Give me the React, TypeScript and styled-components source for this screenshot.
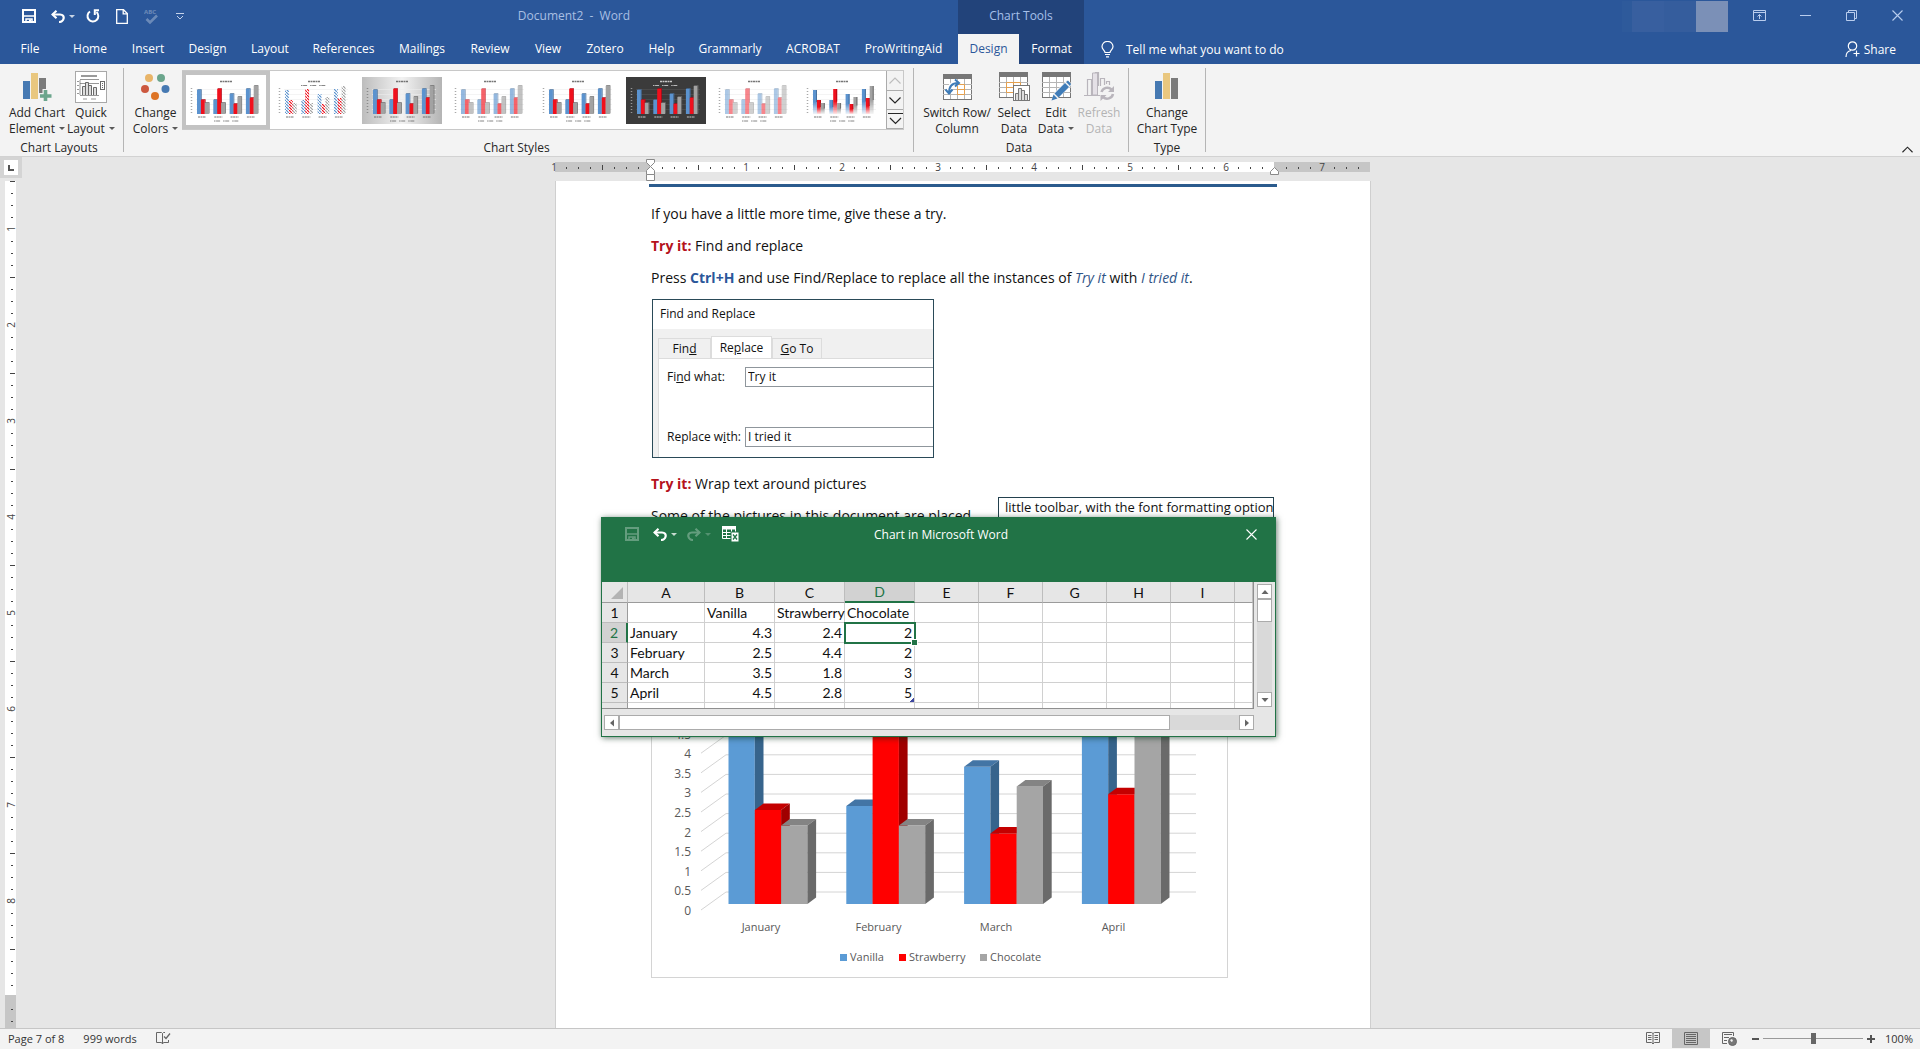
import React from "react";
import styled, { createGlobalStyle, css } from "styled-components";

const UI = '"Open Sans", "Noto Sans", sans-serif';
const SHEET = 'Lato, "Open Sans", sans-serif';
const NAVY = "#2b579a";
const GREEN = "#217346";

const GlobalStyle = createGlobalStyle`
  *, *::before, *::after { box-sizing: border-box; }
  body { margin: 0; font-family: ${UI}; font-size: 12px; color: #262626; }
  button, input { font: inherit; color: inherit; }
  button { background: none; border: 0; padding: 0; }
  svg { display: block; flex: none; }
  p { margin: 0; }
`;

const Shell = styled.div`
  display: flex;
  flex-direction: column;
  height: 100vh;
  overflow: hidden;
  background: #e6e6e6;
`;

/* ---------- title bar and tabs ---------- */

const Header = styled.header`
  background: ${NAVY};
  color: #fff;
`;

const TitleRow = styled.div`
  display: flex;
  height: 34px;
`;

const QuickAccess = styled.div`
  display: grid;
  grid-template-columns: 29px 35px 30px 28px 32px auto;
  justify-content: start;
  align-items: center;
  width: 190px;
  height: 32px;
  padding-left: 22px;
`;

const IconButton = styled.button<{ $dim?: boolean }>`
  display: flex;
  align-items: center;
  opacity: ${(p) => (p.$dim ? 0.3 : 1)};
`;

const DocTitle = styled.div`
  width: 768px;
  line-height: 32px;
  text-align: center;
  white-space: pre;
  color: #a9bfe3;
`;

const ContextTitle = styled.div`
  width: 126px;
  line-height: 32px;
  text-align: center;
  background: #22437a;
  color: #a6c0ea;
`;

const Account = styled.div`
  display: flex;
  height: 32px;
  margin: 0 8px 0 auto;
  padding-top: 1px;
`;

const AccountBlock = styled.div<{ $w: number; $bg: string }>`
  width: ${(p) => p.$w}px;
  background: ${(p) => p.$bg};
`;

const WindowButton = styled.button`
  display: grid;
  place-items: center;
  width: 46px;
  height: 31px;
`;

const TabRow = styled.nav`
  display: flex;
  height: 30px;
`;

const Tab = styled.button<{ $w: number; $kind?: "active" | "context" }>`
  width: ${(p) => p.$w}px;
  line-height: 30px;
  color: #fff;
  white-space: nowrap;
  ${(p) => p.$kind === "active" && css`background: #f3f3f3; color: ${NAVY};`}
  ${(p) => p.$kind === "context" && css`background: #22437a;`}
`;

const TabGap = styled.div`
  width: 4px;
`;

const HeaderAction = styled.button<{ $end?: boolean }>`
  display: flex;
  align-items: center;
  gap: ${(p) => (p.$end ? 4 : 12)}px;
  margin-left: ${(p) => (p.$end ? "auto" : "17px")};
  margin-right: ${(p) => (p.$end ? 24 : 0)}px;
`;

/* ---------- ribbon ---------- */

const Ribbon = styled.div`
  display: flex;
  height: 93px;
  background: #f3f3f3;
  border-bottom: 1px solid #d2d2d2;
`;

const Group = styled.section<{ $end: number }>`
  position: relative;
  display: flex;
  flex-direction: column;
  padding: 0 ${(p) => p.$end}px 0 5px;
  &::after {
    content: "";
    position: absolute;
    right: 0;
    top: 4px;
    bottom: 4px;
    width: 1px;
    background: #b5b5b5;
  }
`;

const GroupBody = styled.div`
  display: flex;
  height: 76px;
`;

const GroupLabel = styled.div`
  line-height: 16px;
  text-align: center;
`;

const BigButton = styled.button<{ $w: number }>`
  display: flex;
  flex-direction: column;
  align-items: center;
  width: ${(p) => p.$w}px;
  padding-top: 4px;
  line-height: 16px;
  white-space: nowrap;
  &:disabled { color: #b4b4b4; }
`;

const BigIcon = styled.span`
  display: grid;
  place-items: center;
  height: 37px;
`;

const Caret = styled.span`
  display: inline-block;
  margin-left: 4px;
  vertical-align: 3px;
  border: 3px solid transparent;
  border-top-color: currentColor;
  border-bottom: 0;
  opacity: 0.75;
`;

const Gallery = styled.div`
  display: flex;
  height: 60px;
  margin-top: 6px;
  border: 1px solid #c8c8c8;
  border-left: 0;
  background: #fff;
`;

const StyleItem = styled.button<{ $on?: boolean }>`
  display: grid;
  place-items: center;
  width: 88px;
  height: 58px;
  ${(p) => p.$on && css`box-shadow: inset 0 0 0 4px #c3c3c3;`}
`;

const GalleryScroll = styled.div`
  display: grid;
  grid-template-rows: 20px 19px 19px;
  width: 17px;
`;

const ScrollStep = styled.button<{ $off?: boolean }>`
  display: grid;
  place-items: center;
  background: #f3f3f3;
  color: ${(p) => (p.$off ? "#bdbdbd" : "#262626")};
  border-left: 1px solid #ababab;
  border-bottom: 1px solid #ababab;
`;

const Collapse = styled.button`
  align-self: flex-end;
  margin: 0 7px 3px auto;
`;

/* ---------- workspace ---------- */

const Workspace = styled.main`
  display: flex;
  flex: 1;
  min-height: 0;
`;

const Side = styled.div`
  width: 22px;
  overflow: hidden;
`;

const TabStop = styled.button`
  display: grid;
  place-items: center;
  width: 22px;
  height: 21px;
  border: solid #d4d4d4;
  border-width: 3px 4px 3px 4px;
  background: #fff;
`;

const DocArea = styled.div`
  display: flex;
  flex: 1;
  flex-direction: column;
  align-items: center;
  min-height: 0;
  padding-right: 16px;
`;

const Sheet = styled.div`
  position: relative;
  flex: 1;
  width: 814px;
  min-height: 0;
`;

const Page = styled.article`
  height: 100%;
  overflow: hidden;
  padding: 3px 96px 0 95px;
  background: #fff;
  box-shadow: 0 0 0 1px #cfcfcf;
  clip-path: inset(0 -2px);
  color: #111;
  font-size: 14px;
  line-height: 32px;
`;

const Rule = styled.hr`
  height: 3px;
  margin: 0 -3px 11px -2px;
  border: 0;
  background: #2b5b8d;
`;

const TryIt = styled.strong`
  color: #b5121b;
`;

const Key = styled.strong`
  color: #2b579a;
`;

const Term = styled.em`
  color: #2f5486;
`;

const FindShot = styled.form`
  width: 282px;
  height: 159px;
  margin: 5px 0 10px 1px;
  overflow: hidden;
  border: 1px solid #2a4a58;
  background: #f0f0f0;
  font-size: 12px;
  line-height: 20px;
`;

const ShotTitle = styled.div`
  height: 29px;
  padding-left: 7px;
  line-height: 28px;
  background: #fff;
`;

const ShotTabs = styled.div`
  display: flex;
  align-items: flex-end;
  height: 29px;
  padding-left: 5px;
`;

const ShotTab = styled.button<{ $on?: boolean; $w: number }>`
  width: ${(p) => p.$w}px;
  height: ${(p) => (p.$on ? 22 : 20)}px;
  border: 1px solid #dcdcdc;
  border-bottom: 0;
  background: ${(p) => (p.$on ? "#fff" : "#f0f0f0")};
  line-height: 20px;
`;

const ShotPanel = styled.div`
  display: flex;
  flex-direction: column;
  gap: 40px;
  height: 100px;
  margin-left: 5px;
  padding: 8px 0 0 8px;
  border: 1px solid #dcdcdc;
  border-width: 1px 0 0 1px;
  background: #fff;
`;

const Field = styled.label`
  display: grid;
  grid-template-columns: 78px 1fr;
`;

const TextBox = styled.input`
  width: 100%;
  height: 20px;
  padding: 0 2px;
  border: 1px solid #8f969c;
  border-right: 0;
  border-radius: 0;
  background: #fff;
`;

const WrapRow = styled.div`
  display: grid;
  grid-template-columns: 347px 276px;
  height: 60px;
  white-space: nowrap;
`;

const Callout = styled.div`
  height: 60px;
  margin-top: -3px;
  padding-left: 6px;
  border: 1px solid #23414e;
  font-size: 13px;
  line-height: 18px;
`;

/* ---------- data window ---------- */

const DataWindow = styled.section`
  position: absolute;
  left: 45px;
  top: 336px;
  width: 675px;
  height: 220px;
  border: 1px solid ${GREEN};
  background: #e6e6e6;
  box-shadow: 1px 1px 6px rgba(0, 40, 20, 0.6);
`;

const DataTitle = styled.div`
  display: grid;
  grid-template-columns: 1fr auto 1fr;
  align-items: center;
  height: 64px;
  padding: 0 18px 32px 23px;
  background: ${GREEN};
  color: #fff;
`;

const DataTools = styled.div`
  display: grid;
  grid-template-columns: 28px 34px 35px auto;
  justify-content: start;
  align-items: center;
`;

const DataClose = styled.button`
  justify-self: end;
`;

const DataBody = styled.div`
  display: grid;
  grid-template-columns: 652px 15px;
  column-gap: 3px;
  height: 127px;
`;

const GridClip = styled.div`
  height: 127px;
  overflow: hidden;
  border: solid #8f8f8f;
  border-width: 0 1px 1px 0;
`;

const Grid = styled.table`
  width: 651px;
  table-layout: fixed;
  border-spacing: 0;
  font-family: ${SHEET};
  font-size: 14px;
  line-height: 19px;
  color: #111;
`;

const ColHead = styled.th<{ $on?: boolean }>`
  height: 20px;
  padding: 0;
  font-weight: 400;
  border: solid #9b9b9b;
  border-width: 0 1px 1px 0;
  border-right-color: #bdbdbd;
  background: #e6e6e6;
  ${(p) => p.$on && css`background: #d2d2d2; color: ${GREEN}; border-bottom: 2px solid ${GREEN};`}
`;

const RowHead = styled.th<{ $on?: boolean }>`
  height: 20px;
  padding: 0;
  font-weight: 400;
  border: solid #9b9b9b;
  border-width: 0 1px 1px 0;
  border-bottom-color: #bdbdbd;
  background: #e6e6e6;
  ${(p) => p.$on && css`background: #d2d2d2; color: ${GREEN}; border-right: 2px solid ${GREEN};`}
`;

const Cell = styled.td<{ $num?: boolean; $on?: boolean; $last?: boolean }>`
  position: relative;
  height: 20px;
  padding: 0 2px;
  text-align: ${(p) => (p.$num ? "right" : "left")};
  white-space: nowrap;
  border: solid #d0d0d0;
  border-width: 0 1px 1px 0;
  background: #fff;
  ${(p) => p.$on && css`
    outline: 2px solid ${GREEN};
    outline-offset: -1px;
    z-index: 1;
    &::after {
      content: "";
      position: absolute;
      right: -3px;
      bottom: -3px;
      width: 5px;
      height: 5px;
      background: ${GREEN};
      box-shadow: 0 0 0 1px #fff;
    }
  `}
  ${(p) => p.$last && css`
    &::after {
      content: "";
      position: absolute;
      right: 0;
      bottom: 0;
      width: 4px;
      height: 4px;
      background: linear-gradient(135deg, transparent 40%, #3f48a0 40%);
    }
  `}
`;

const VBar = styled.div`
  display: grid;
  grid-template-rows: 15px 23px 1fr 15px;
  height: 123px;
  margin-top: 2px;
  background: #d9d9d9;
`;

const HBar = styled.div`
  display: grid;
  grid-template-columns: 15px 551px 1fr 15px;
  width: 650px;
  height: 15px;
  margin: 6px 0 0 2px;
  background: #d9d9d9;
`;

const BarPart = styled.button`
  display: grid;
  place-items: center;
  border: 1px solid #ababab;
  background: #fff;
`;

/* ---------- status bar ---------- */

const StatusBar = styled.footer`
  display: flex;
  align-items: center;
  height: 21px;
  padding: 0 7px 1px 8px;
  border-top: 1px solid #c6c6c6;
  background: #f3f3f3;
  color: #333;
  font-size: 11px;
  white-space: nowrap;
`;

const StatusText = styled.span`
  margin-right: 19px;
`;

const Views = styled.div`
  display: flex;
  align-self: stretch;
  margin-left: auto;
  margin-right: 4px;
`;

const ViewButton = styled.button<{ $on?: boolean }>`
  display: grid;
  place-items: center;
  width: 38px;
  background: ${(p) => (p.$on ? "#c6c6c6" : "transparent")};
`;

const ZoomSlider = styled.input`
  appearance: none;
  width: 100px;
  height: 12px;
  margin: 0 4px;
  background: linear-gradient(#9a9a9a, #9a9a9a) center / 100% 1px no-repeat;
  &::-webkit-slider-thumb {
    appearance: none;
    width: 5px;
    height: 11px;
    background: #666;
  }
`;

const ZoomValue = styled.button`
  margin-left: 10px;
`;

/* ---------- icons ---------- */

const SaveIcon = () => (
  <svg width="14" height="14" viewBox="0 0 14 14" fill="none" stroke="#fff" strokeWidth="2">
    <path d="M1 1H13V13H1Z" />
    <path d="M2 7H12" strokeWidth="1.5" />
    <path d="M4 13V10H10V13" strokeWidth="1.5" />
    <path d="M8 10.5V13" />
  </svg>
);

const UndoIcon = ({ flip }: { flip?: boolean }) => (
  <svg width="14" height="13" viewBox="0 0 14 13" fill="none" stroke="#fff" strokeWidth="2.2" transform={flip ? "scale(-1 1)" : undefined}>
    <path d="M5.5 0.8L1.5 4.5L5.5 8.2" />
    <path d="M1.5 4.5H9C12 4.5 13 6.500 12.600 8.500C12.200 10.500 10 12 8 12" />
  </svg>
);

const RepeatIcon = () => (
  <svg width="14" height="14" viewBox="0 0 14 14" fill="none" stroke="#fff" strokeWidth="2">
    <path d="M4 2.500A5.400 5.400 0 1 0 10.500 3" />
    <path d="M13 1.200H8.800V6" />
  </svg>
);

const NewIcon = () => (
  <svg width="12" height="15" viewBox="0 0 12 15" fill="none" stroke="#fff" strokeWidth="1.300">
    <path d="M0.700 0.700H7.500L11.300 4.500V14.300H0.700Z" />
    <path d="M7.200 0.700V4.800H11.300" />
  </svg>
);

const SpellIcon = () => (
  <svg width="15" height="17" viewBox="0 0 15 17">
    <text x="0" y="6" fontSize="6" fontWeight="700" fill="#fff">ABC</text>
    <path d="M2.500 11L6 14.500L13 7.500" fill="none" stroke="#fff" strokeWidth="2.600" />
  </svg>
);

const CustomIcon = () => (
  <svg width="8" height="7" viewBox="0 0 8 7" fill="none" stroke="#c4d2ea">
    <path d="M0 0.500H8M1 3L4 6L7 3" />
  </svg>
);

const Chevron = ({ up, size = 12 }: { up?: boolean; size?: number }) => (
  <svg width={size} height="7" viewBox="0 0 12 7" fill="none" stroke="currentColor" strokeWidth="1.200">
    <path d={up ? "M0.500 6.500L6 1L11.500 6.500" : "M0.500 0.500L6 6L11.500 0.500"} />
  </svg>
);

const BulbIcon = () => (
  <svg width="13" height="17" viewBox="0 0 13 17" fill="none" stroke="#fff" strokeWidth="1.200">
    <path d="M4 11.500C4 9.500 1 8.500 1 5.600A5.300 5 0 0 1 12 5.600C12 8.500 9 9.500 9 11.500Z" />
    <path d="M4 13.500H9M5 15.800H8" />
  </svg>
);

const ShareIcon = () => (
  <svg width="15" height="17" viewBox="0 0 15 17" fill="none" stroke="#fff" strokeWidth="1.200">
    <circle cx="7.500" cy="5" r="4.200" />
    <path d="M1 16C1 12.500 3 10 6 9.500M11.500 9.500V15.500M8.500 12.500H14.500" />
  </svg>
);

const ChartColumns = ({ plus }: { plus?: boolean }) => (
  <svg width={plus ? 29 : 24} height="29" viewBox={plus ? "0 0 29 29" : "0 0 24 29"}>
    <path fill="#4679b2" d="M0 9H7V27H0Z" />
    <path fill="#e9c77f" d="M8 1H15V27H8Z" />
    <path fill="#7b7b7b" d="M16 6H23V27H16Z" />
    {plus && (
      <g>
        <path d="M22.500 17V30M16 24H29" stroke="#f3f3f3" strokeWidth="6" />
        <path d="M22.500 18V30M17 24H28.500" stroke="#6ba58c" strokeWidth="3.600" />
      </g>
    )}
  </svg>
);

const QuickLayoutIcon = () => (
  <svg width="32" height="32" viewBox="0 0 32 32" fill="none" stroke="#6a6a6a">
    <rect x="0.500" y="0.500" width="31" height="31" fill="#fff" stroke="#a8a8a8" />
    <path d="M6 5H22" stroke="#9a9a9a" strokeWidth="2" />
    <path d="M5 24.500H24M5 9V24M2 10.500H4M2 14.500H4M2 18.500H4M2 22.500H4M5 8.500H24M5 12.500H24M8 28H12M16 28H21" strokeWidth="0.700" />
    <path d="M7.500 24V15.500H10.500V24M10.500 24V11.500H13.500V24M13.500 24V14.500H16.500V24M18.500 24V16.500H21.500V24" fill="#ddd" />
    <rect x="25.500" y="10.500" width="4" height="8" />
    <path d="M27.500 12V17.500" strokeDasharray="1 1" />
  </svg>
);

const ColorsIcon = () => (
  <svg width="29" height="28" viewBox="0 0 29 28">
    <circle cx="8" cy="5" r="4" fill="#e8b468" />
    <circle cx="20" cy="5" r="4" fill="#6ba58c" />
    <circle cx="4" cy="16" r="4" fill="#cc583f" />
    <circle cx="24.500" cy="16" r="4" fill="#4679b2" />
    <circle cx="14" cy="23" r="4" fill="#dd7426" />
  </svg>
);

const TableBase = () => (
  <g>
    <rect x="0.500" y="0.500" width="28" height="25" fill="#fff" stroke="#777" />
    <path d="M0 0H29V5H0Z" fill="#777" />
    <path d="M0 10.500H29M0 15.500H29M0 20.500H29M7.500 5V25M14.500 5V25M21.500 5V25" stroke="#b5b5b5" fill="none" />
  </g>
);

const SwitchIcon = () => (
  <svg width="29" height="26" viewBox="0 0 29 26" fill="none">
    <TableBase />
    <path d="M7.500 10.500H21.500V20.500H14.500V15.500H21.500M14.500 10.500V20.500" stroke="#e5a04e" />
    <path d="M6 19C6 13 9 9 15 9" stroke="#fff" strokeWidth="5" />
    <path d="M6 19C6 13 9 9 15 9M12 5.500L16 9L12 12.500M2.500 15.500L6 19.500L9.500 15.500" stroke="#3f7cb8" strokeWidth="2" />
  </svg>
);

const SelectIcon = () => (
  <svg width="31" height="29" viewBox="0 0 31 29" fill="none">
    <TableBase />
    <path d="M7.500 10.500H21.500V20.500H7.500ZM7.500 15.500H21.500M14.500 10.500V20.500" stroke="#e5a04e" />
    <rect x="14.500" y="13.500" width="16" height="15" fill="#fff" stroke="#777" />
    <path d="M16.500 28V21.500H19.500V28M19.500 28V16.500H22.500V28M22.500 28V18.500H25.500V28M25.500 28V22.500H28.500V28" fill="#ddd" stroke="#777" />
  </svg>
);

const EditIcon = () => (
  <svg width="29" height="29" viewBox="0 0 29 29" fill="none">
    <TableBase />
    <path d="M10 28L12 21L25 8L30 13L16 26Z" fill="#f3f3f3" />
    <path d="M9.500 28.500L11.500 22.500L15.500 26.500ZM12.500 21.500L23 11L27 15L16.500 25.500ZM24 10L26 8.500L29 12L28 14Z" fill="#3f7cb8" />
  </svg>
);

const RefreshIcon = () => (
  <svg width="31" height="29" viewBox="0 0 31 29" fill="none" stroke="#b9b5bc">
    <path d="M0 23.500H16M3.500 23V7.500H7.500V23M11.500 23V0.500H14.500V14M16.500 14V6.500H20.500V13M22.500 12V9.500H25.500V13" strokeWidth="1.200" />
    <path d="M8.500 1H13.500V23H8.500Z" fill="#e4e0e6" />
    <path d="M17.500 20A6 6 0 0 1 27.500 17.500M29 22A6 6 0 0 1 19 25" strokeWidth="2.500" />
    <path d="M30 14V20H24ZM16.500 29V23H22.500Z" fill="#b9b5bc" stroke="none" />
  </svg>
);

const RibbonOptionsIcon = () => (
  <svg width="13" height="11" viewBox="0 0 13 11" fill="none" stroke="#b9cdee">
    <path d="M0.500 0.500H12.500V10.500H0.500ZM0.500 2.500H12.500M6.500 9V4.500M4.500 6.500L6.500 4.500L8.500 6.500" />
  </svg>
);

const CrossIcon = ({ color }: { color: string }) => (
  <svg width="11" height="11" viewBox="0 0 11 11" stroke={color} strokeWidth="1.100">
    <path d="M0.500 0.500L10.500 10.500M10.500 0.500L0.500 10.500" />
  </svg>
);

const Triangle = ({ turn }: { turn: number }) => (
  <svg width="8" height="8" viewBox="0 0 8 8" fill="#666">
    <path d="M0.500 6L4 2L7.500 6Z" transform={`rotate(${turn} 4 4)`} />
  </svg>
);

const SheetIcon = () => (
  <svg width="17" height="16" viewBox="0 0 17 16" fill="none" stroke="#fff">
    <path d="M0.500 0.500H13.500V12.500H0.500ZM0.500 6.500H13.500M0.500 9.500H13.500M4.500 3V12.500M9.500 3V12.500" />
    <path d="M0 0H14V3.500H0Z" fill="#fff" stroke="none" />
    <rect x="9" y="6" width="8" height="10" fill="#fff" stroke={GREEN} />
    <path d="M11 8.500L15 13.500M15 8.500L11 13.500" stroke={GREEN} strokeWidth="1.300" />
  </svg>
);

const ProofIcon = () => (
  <svg width="15" height="13" viewBox="0 0 15 13" fill="none" stroke="#666">
    <path d="M9 0.500H7.500L6.500 1.500L5.500 0.500H0.500V10.500H5.500L6.500 12L7.500 10.500H12.500V8M6.500 1.500V12" />
    <path d="M8 4.500L10 6.500L14 1.500" strokeWidth="1.300" />
  </svg>
);

const ReadIcon = () => (
  <svg width="14" height="13" viewBox="0 0 14 13" fill="none" stroke="#666">
    <path d="M0.500 0.500H5.500L7 1.500L8.500 0.500H13.500V10.500H8.500L7 12L5.500 10.500H0.500ZM7 1.500V12M2 3.500H5.500M2 5.500H5.500M2 7.500H5.500M8.500 3.500H12M8.500 5.500H12M8.500 7.500H12" />
  </svg>
);

const PrintIcon = () => (
  <svg width="14" height="13" viewBox="0 0 14 13" fill="none" stroke="#666">
    <path d="M0.500 0.500H13.500V12.500H0.500ZM2 2.500H12M2 4.500H12M2 6.500H12M2 8.500H12M2 10.500H12" />
  </svg>
);

const WebIcon = () => (
  <svg width="15" height="14" viewBox="0 0 15 14" fill="none" stroke="#666">
    <path d="M5 11.500H0.500V0.500H11.500V4M2 2.500H10M2 5.500H7M2 8.500H5" />
    <circle cx="10.500" cy="9.500" r="4" fill="#777" stroke="#666" />
    <path d="M8 8L10 7L11 9L9.500 10ZM11.500 11.500L13 10" fill="#f3f3f3" stroke="none" />
  </svg>
);

/* ---------- chart style thumbnails ---------- */

type Look = "plain" | "hatch" | "shade" | "pale" | "bold" | "dark" | "paler" | "fade";

const THUMB_TOPS = [
  [13, 23, 26],
  [23, 12, 26],
  [17, 27, 20],
  [12, 21, 9],
];
const THUMB_COLORS = ["#5b93cf", "#f0101c", "#a2a2a2"];
const THUMB_SIDES = ["#47719f", "#b80714", "#6c6c6c"];

const Thumb = ({ look }: { look: Look }) => {
  const alpha = look === "pale" ? 0.65 : look === "paler" ? 0.5 : 1;
  const ink = look === "dark" ? "#eee" : "#555";
  const fill = (i: number) =>
    look === "hatch" || look === "fade" ? `url(#${look}${i})` : THUMB_COLORS[i];
  return (
    <svg width="80" height="47" viewBox="0 0 80 47">
      <defs>
        <linearGradient id="shadeBg">
          <stop offset="0" stopColor="#bdbdbd" />
          <stop offset="0.5" stopColor="#f2f2f2" />
          <stop offset="1" stopColor="#b4b4b4" />
        </linearGradient>
        {THUMB_COLORS.map((c, i) => (
          <React.Fragment key={c}>
            <pattern id={`hatch${i}`} width="3" height="3" patternUnits="userSpaceOnUse">
              <rect width="3" height="3" fill="#fff" />
              <path d="M0 0L3 3" stroke={c} strokeWidth="1.200" />
            </pattern>
            <linearGradient id={`fade${i}`} x1="0" y1="0" x2="0" y2="1">
              <stop offset="0.500" stopColor={c} />
              <stop offset="1" stopColor={c} stopOpacity="0.100" />
            </linearGradient>
          </React.Fragment>
        ))}
      </defs>
      <rect
        width="80"
        height="47"
        fill={look === "shade" ? "url(#shadeBg)" : look === "dark" ? "#3b3b3b" : "#fff"}
      />
      <path
        d="M10 12.500H74M10 17.500H74M10 22.500H74M10 27.500H74M10 32.500H74"
        stroke={look === "dark" ? "#555" : "#ececec"}
        strokeWidth="0.600"
      />
      <path d="M5.500 11V38" stroke={ink} strokeWidth="1.500" strokeDasharray="1 2" opacity="0.500" />
      <path d="M34 4.500H46" stroke={ink} strokeWidth="1.300" strokeDasharray="2 0.500" opacity="0.800" />
      {THUMB_TOPS.map((tops, g) => {
        const x0 = 11 + g * 16.3;
        return (
          <g key={g}>
            <g opacity={alpha}>
              {tops.map((top, i) => (
                <g key={i}>
                  <rect x={x0 + i * 3.900} y={top} width="3.900" height={37 - top} fill={fill(i)} />
                  {look !== "fade" && look !== "hatch" && (
                    <path
                      d={`M${x0 + i * 3.900} ${top}l0.800 -0.800h3.900v${37 - top}l-0.800 0.800v${top - 37}z`}
                      fill={THUMB_SIDES[i]}
                    />
                  )}
                  {look === "fade" && (
                    <path d={`M${x0 + i * 3.900 + 3.500} ${top}v${(37 - top) / 2}`} stroke={THUMB_SIDES[i]} />
                  )}
                </g>
              ))}
            </g>
            <path d={`M${x0 + 1} 40h8`} stroke={ink} strokeWidth="1" strokeDasharray="2 0.500" opacity="0.800" />
          </g>
        );
      })}
      <path
        d={look === "hatch" || look === "dark" ? "M27 8.500H53" : "M28 44H53"}
        stroke={ink}
        strokeWidth="1"
        strokeDasharray="1.500 0.600 4 3"
        opacity="0.700"
      />
    </svg>
  );
};

/* ---------- rulers ---------- */

const H_TICKS = Array.from({ length: 68 }, (_, i) => i - 8);
const V_TICKS = Array.from({ length: 71 }, (_, i) => i + 4);

const TopRuler = () => (
  <svg width="814" height="24" viewBox="0 0 814 24" overflow="visible" fontSize="10" fill="#444">
    <rect x="-1" y="5" width="815" height="10" fill="#c6c6c6" />
    <rect x="94" y="5" width="624" height="10" fill="#fff" />
    {H_TICKS.map((k) => {
      const x = 94 + k * 12;
      if (k === 0 || k === 52) return null;
      if (k % 8 === 0)
        return (
          <text key={k} x={x} y="14" textAnchor="middle">
            {Math.abs(k / 8)}
          </text>
        );
      return <rect key={k} x={x} y={k % 4 === 0 ? 8 : 10} width="1" height={k % 4 === 0 ? 5 : 2} />;
    })}
    <g fill="#fff" stroke="#8a8a8a">
      <path d="M90.500 2.500H98.500V5.500L94.500 9.500L90.500 5.500Z" />
      <path d="M90.500 17.500V13.500L94.500 9.500L98.500 13.500V17.500Z" />
      <path d="M90.500 17.500H98.500V23.500H90.500Z" />
      <path d="M714.500 17.500V14.500L718.500 10.500L722.500 14.500V17.500Z" />
    </g>
  </svg>
);

const SideRuler = () => (
  <svg width="22" height="1000" viewBox="0 0 22 1000" fontSize="10" fill="#444">
    <rect x="5" y="3" width="11" height="814" fill="#fff" />
    <rect x="5" y="817" width="11" height="183" fill="#c6c6c6" />
    {V_TICKS.map((k) => {
      const y = k * 12 - 45;
      if (k === 72) return null;
      if (k % 8 === 0)
        return (
          <text key={k} x="15" y={y} textAnchor="middle" transform={`rotate(-90 15 ${y})`}>
            {k / 8}
          </text>
        );
      return <rect key={k} x={k % 4 === 0 ? 10 : 11} y={y} width={k % 4 === 0 ? 5 : 2} height="1" />;
    })}
  </svg>
);

/* ---------- document chart ---------- */

const SERIES = [
  { name: "Vanilla", front: "#5b9bd5", side: "#37648c", top: "#4375a5", data: [4.3, 2.5, 3.5, 4.5], key: 189 },
  { name: "Strawberry", front: "#ff0000", side: "#a00000", top: "#c40000", data: [2.4, 4.4, 1.8, 2.8], key: 248 },
  { name: "Chocolate", front: "#a5a5a5", side: "#6a6a6a", top: "#848484", data: [2, 2, 3, 5], key: 329 },
];
const MONTHS = ["January", "February", "March", "April"];

const DocChart = () => (
  <svg width="577" height="418" viewBox="0 0 577 418" fontSize="11" fill="#595959">
    <rect x="0.500" y="0.500" width="576" height="417" fill="#fff" stroke="#d4d4d4" />
    {Array.from({ length: 11 }, (_, i) => {
      const y = 350 - i * 19.600;
      return (
        <g key={i}>
          <path d={`M50 ${y}L75 ${y - 18}H545`} fill="none" stroke="#d4d4d4" />
          <text x="40" y={y + 5} textAnchor="end" fontSize="12">
            {i / 2}
          </text>
        </g>
      );
    })}
    {MONTHS.map((month, m) => (
      <g key={month}>
        {SERIES.map((s, i) => {
          const x = 77.500 + m * 117.800 + i * 26.300;
          const top = 344 - s.data[m] * 39.200;
          const h = 344 - top;
          return (
            <g key={s.name}>
              <rect x={x} y={top} width="26.300" height={h} fill={s.front} />
              <path d={`M${x} ${top}l8.700 -6.500h26.300l-8.700 6.500z`} fill={s.top} />
              <path d={`M${x + 26.300} ${top}l8.700 -6.500v${h}l-8.700 6.500z`} fill={s.side} />
            </g>
          );
        })}
        <text x={110 + m * 117.500} y="371" textAnchor="middle">
          {month}
        </text>
      </g>
    ))}
    {SERIES.map((s) => (
      <g key={s.name}>
        <rect x={s.key} y="394" width="7" height="7" fill={s.front} />
        <text x={s.key + 10} y="401">
          {s.name}
        </text>
      </g>
    ))}
  </svg>
);

/* ---------- data ---------- */

const TABS: [string, number][] = [
  ["File", 60], ["Home", 60], ["Insert", 56], ["Design", 63], ["Layout", 62], ["References", 85],
  ["Mailings", 72], ["Review", 64], ["View", 52], ["Zotero", 62], ["Help", 51], ["Grammarly", 86],
  ["ACROBAT", 80], ["ProWritingAid", 101],
];
const LOOKS: Look[] = ["plain", "hatch", "shade", "pale", "bold", "dark", "paler", "fade"];
const COLS: [string, number][] = [
  ["A", 77], ["B", 70], ["C", 70], ["D", 70], ["E", 64], ["F", 64], ["G", 64], ["H", 64], ["I", 64], ["", 18],
];
const ROWS = [
  ["", "Vanilla", "Strawberry", "Chocolate"],
  ...MONTHS.map((m, i) => [m, ...SERIES.map((s) => String(s.data[i]))]),
  [],
];

export default function App() {
  return (
    <Shell>
      <GlobalStyle />
      <Header>
        <TitleRow>
          <QuickAccess>
            <IconButton aria-label="Save"><SaveIcon /></IconButton>
            <IconButton aria-label="Undo"><UndoIcon /><Caret /></IconButton>
            <IconButton aria-label="Repeat"><RepeatIcon /></IconButton>
            <IconButton aria-label="New"><NewIcon /></IconButton>
            <IconButton aria-label="Spelling" $dim><SpellIcon /></IconButton>
            <IconButton aria-label="Customize"><CustomIcon /></IconButton>
          </QuickAccess>
          <DocTitle>{"Document2  -  Word"}</DocTitle>
          <ContextTitle>Chart Tools</ContextTitle>
          <Account>
            <AccountBlock $w={10} $bg="#2e5a9b" />
            <AccountBlock $w={32} $bg="#385f9f" />
            <AccountBlock $w={32} $bg="#355d9d" />
            <AccountBlock $w={32} $bg="#7b90b7" />
          </Account>
          <WindowButton aria-label="Ribbon display options"><RibbonOptionsIcon /></WindowButton>
          <WindowButton aria-label="Minimize">
            <svg width="11" height="1"><rect width="11" height="1" fill="#b9cdee" /></svg>
          </WindowButton>
          <WindowButton aria-label="Restore">
            <svg width="11" height="11" fill="none" stroke="#b9cdee">
              <path d="M0.500 2.500H8.500V10.500H0.500ZM2.500 2.500V0.500H10.500V8.500H8.500" />
            </svg>
          </WindowButton>
          <WindowButton aria-label="Close"><CrossIcon color="#b9cdee" /></WindowButton>
        </TitleRow>
        <TabRow>
          {TABS.map(([name, w]) => (
            <Tab key={name} $w={w}>{name}</Tab>
          ))}
          <TabGap />
          <Tab $w={61} $kind="active">Design</Tab>
          <Tab $w={65} $kind="context">Format</Tab>
          <HeaderAction><BulbIcon />Tell me what you want to do</HeaderAction>
          <HeaderAction $end><ShareIcon />Share</HeaderAction>
        </TabRow>
      </Header>

      <Ribbon>
        <Group $end={11}>
          <GroupBody>
            <BigButton $w={64}><BigIcon><ChartColumns plus /></BigIcon>Add Chart<span>Element<Caret /></span></BigButton>
            <BigButton $w={44}><BigIcon><QuickLayoutIcon /></BigIcon>Quick<span>Layout<Caret /></span></BigButton>
          </GroupBody>
          <GroupLabel>Chart Layouts</GroupLabel>
        </Group>
        <Group $end={10}>
          <GroupBody>
            <BigButton $w={53}><BigIcon><ColorsIcon /></BigIcon>Change<span>Colors<Caret /></span></BigButton>
            <Gallery>
              {LOOKS.map((look, i) => (
                <StyleItem key={look} $on={i === 0} aria-label={`Style ${i + 1}`}><Thumb look={look} /></StyleItem>
              ))}
              <GalleryScroll>
                <ScrollStep $off aria-label="Row up"><Chevron up /></ScrollStep>
                <ScrollStep aria-label="Row down"><Chevron /></ScrollStep>
                <ScrollStep aria-label="More styles">
                  <svg width="15" height="14" fill="none" stroke="#262626">
                    <path d="M0 1.500H15M2 6L7.500 11.500L13 6" strokeWidth="1.200" />
                  </svg>
                </ScrollStep>
              </GalleryScroll>
            </Gallery>
          </GroupBody>
          <GroupLabel>Chart Styles</GroupLabel>
        </Group>
        <Group $end={10}>
          <GroupBody>
            <BigButton $w={76}><BigIcon><SwitchIcon /></BigIcon>Switch Row/<span>Column</span></BigButton>
            <BigButton $w={38}><BigIcon><SelectIcon /></BigIcon>Select<span>Data</span></BigButton>
            <BigButton $w={46}><BigIcon><EditIcon /></BigIcon>Edit<span>Data<Caret /></span></BigButton>
            <BigButton $w={40} disabled><BigIcon><RefreshIcon /></BigIcon>Refresh<span>Data</span></BigButton>
          </GroupBody>
          <GroupLabel>Data</GroupLabel>
        </Group>
        <Group $end={6}>
          <GroupBody>
            <BigButton $w={66}><BigIcon><ChartColumns /></BigIcon>Change<span>Chart Type</span></BigButton>
          </GroupBody>
          <GroupLabel>Type</GroupLabel>
        </Group>
        <Collapse aria-label="Collapse ribbon"><Chevron up size={11} /></Collapse>
      </Ribbon>

      <Workspace>
        <Side>
          <TabStop aria-label="Tab stop">
            <svg width="6" height="6" fill="none" stroke="#555" strokeWidth="2"><path d="M1 0V5H6" /></svg>
          </TabStop>
          <SideRuler />
        </Side>
        <DocArea>
          <TopRuler />
          <Sheet>
            <Page>
              <Rule />
              <p>If you have a little more time, give these a try.</p>
              <p><TryIt>Try it:</TryIt> Find and replace</p>
              <p>
                Press <Key>Ctrl+H</Key> and use Find/Replace to replace all the instances of <Term>Try it</Term> with{" "}
                <Term>I tried it</Term>.
              </p>
              <FindShot>
                <ShotTitle>Find and Replace</ShotTitle>
                <ShotTabs>
                  <ShotTab type="button" $w={53}>Fin<u>d</u></ShotTab>
                  <ShotTab type="button" $w={61} $on>Re<u>p</u>lace</ShotTab>
                  <ShotTab type="button" $w={50}><u>G</u>o To</ShotTab>
                </ShotTabs>
                <ShotPanel>
                  <Field><span>Fi<u>n</u>d what:</span><TextBox defaultValue="Try it" /></Field>
                  <Field><span>Replace w<u>i</u>th:</span><TextBox defaultValue="I tried it" /></Field>
                </ShotPanel>
              </FindShot>
              <p><TryIt>Try it:</TryIt> Wrap text around pictures</p>
              <WrapRow>
                <p>Some of the pictures in this document are placed</p>
                <Callout>little toolbar, with the font formatting option</Callout>
              </WrapRow>
              <DocChart />
            </Page>

            <DataWindow>
              <DataTitle>
                <DataTools>
                  <IconButton aria-label="Save" $dim><SaveIcon /></IconButton>
                  <IconButton aria-label="Undo"><UndoIcon /><Caret /></IconButton>
                  <IconButton aria-label="Redo" $dim><UndoIcon flip /><Caret /></IconButton>
                  <IconButton aria-label="Edit data in Excel"><SheetIcon /></IconButton>
                </DataTools>
                <span>Chart in Microsoft Word</span>
                <DataClose aria-label="Close"><CrossIcon color="#fff" /></DataClose>
              </DataTitle>
              <DataBody>
                <GridClip>
                  <Grid>
                    <colgroup>
                      <col width={26} />
                      {COLS.map(([c, w]) => <col key={c} width={w} />)}
                    </colgroup>
                    <thead>
                      <tr>
                        <ColHead aria-label="Select all">
                          <svg width="23" height="18"><path d="M21 4V16H9Z" fill="#b3b3b3" /></svg>
                        </ColHead>
                        {COLS.map(([c]) => <ColHead key={c} $on={c === "D"}>{c}</ColHead>)}
                      </tr>
                    </thead>
                    <tbody>
                      {ROWS.map((row, r) => (
                        <tr key={r}>
                          <RowHead $on={r === 1}>{r < 5 ? r + 1 : ""}</RowHead>
                          {COLS.map(([c], i) => (
                            <Cell key={c} $num={r > 0 && i > 0} $on={r === 1 && i === 3} $last={r === 4 && i === 3}>
                              {row[i]}
                            </Cell>
                          ))}
                        </tr>
                      ))}
                    </tbody>
                  </Grid>
                </GridClip>
                <VBar>
                  <BarPart aria-label="Scroll up"><Triangle turn={0} /></BarPart>
                  <BarPart aria-label="Vertical thumb" />
                  <span />
                  <BarPart aria-label="Scroll down"><Triangle turn={180} /></BarPart>
                </VBar>
              </DataBody>
              <HBar>
                <BarPart aria-label="Scroll left"><Triangle turn={-90} /></BarPart>
                <BarPart aria-label="Horizontal thumb" />
                <span />
                <BarPart aria-label="Scroll right"><Triangle turn={90} /></BarPart>
              </HBar>
            </DataWindow>
          </Sheet>
        </DocArea>
      </Workspace>

      <StatusBar>
        <StatusText>Page 7 of 8</StatusText>
        <StatusText>999 words</StatusText>
        <ProofIcon />
        <Views>
          <ViewButton aria-label="Read mode"><ReadIcon /></ViewButton>
          <ViewButton aria-label="Print layout" $on><PrintIcon /></ViewButton>
          <ViewButton aria-label="Web layout"><WebIcon /></ViewButton>
        </Views>
        <IconButton aria-label="Zoom out">
          <svg width="7" height="8"><path d="M0 4H7" stroke="#555" strokeWidth="2" /></svg>
        </IconButton>
        <ZoomSlider type="range" aria-label="Zoom" min={0} max={100} defaultValue={51} />
        <IconButton aria-label="Zoom in">
          <svg width="8" height="8"><path d="M0 4H8M4 0V8" stroke="#555" strokeWidth="2" /></svg>
        </IconButton>
        <ZoomValue>100%</ZoomValue>
      </StatusBar>
    </Shell>
  );
}
